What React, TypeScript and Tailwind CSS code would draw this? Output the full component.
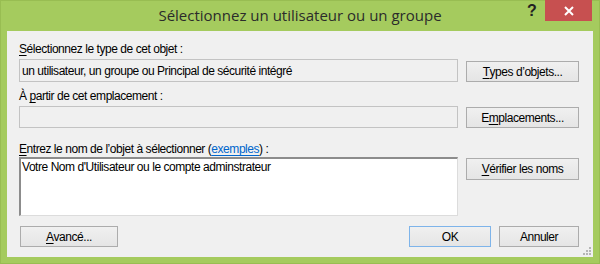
import React from 'react';

function U({ children }: { children: React.ReactNode }) {
  return <span className="underline underline-offset-2">{children}</span>;
}

function Button({
  children,
  className = '',
  primary = false,
}: {
  children: React.ReactNode;
  className?: string;
  primary?: boolean;
}) {
  return (
    <button
      type="button"
      className={`h-[21px] border bg-gradient-to-b from-[#f0f0f0] to-[#e5e5e5] text-[12px] tracking-[-0.45px] text-black leading-none flex items-center justify-center ${
        primary ? 'border-[#7eb4ea]' : 'border-[#acacac]'
      } ${className}`}
    >
      {children}
    </button>
  );
}

export default function App() {
  return (
    <div
      className="w-[600px] h-[264px] bg-[#a5cb5e] flex flex-col border border-[#98bd52]"
      style={{ fontFamily: '"Liberation Sans", Arial, sans-serif' }}
    >
      <div className="relative h-[30px] shrink-0">
        <div
          className="absolute inset-0 flex items-center justify-center pb-[1px] text-[15px] text-[#2b2b2b]"
          style={{ fontFamily: '"Open Sans", "Noto Sans", sans-serif' }}
        >
          Sélectionnez un utilisateur ou un groupe
        </div>
        <div className="absolute right-[7px] top-[-1px] flex items-start">
          <div className="w-[22px] h-[22px] flex items-center justify-center text-[16px] font-bold text-[#222] mr-[2px]">
            ?
          </div>
          <div className="w-[47px] h-[21px] bg-[#c75050] flex items-center justify-center">
            <svg width="10" height="10" viewBox="0 0 10 10">
              <path d="M1 1 L9 9 M9 1 L1 9" stroke="#fff" strokeWidth="2" />
            </svg>
          </div>
        </div>
      </div>

      <div className="relative mx-[6px] h-[226px] bg-[#f0f0f0] pl-[12px] pr-[14px] pt-[11px] text-[12px] tracking-[-0.45px] text-black">
        <div className="leading-[14px]">
          <U>S</U>électionnez le type de cet objet :
        </div>
        <div className="flex items-start gap-[8px] mt-[3px]">
          <div className="flex-1 h-[23px] border border-[#c3c3c3] bg-[#f0f0f0] flex items-center px-[2px]">
            un utilisateur, un groupe ou Principal de sécurité intégré
          </div>
          <Button className="w-[113px] mt-[2px]">
            <U>T</U>ypes d’objets...
          </Button>
        </div>

        <div className="leading-[14px] mt-[7px]">
          À <U>p</U>artir de cet emplacement :
        </div>
        <div className="flex items-start gap-[8px] mt-[3px]">
          <div className="flex-1 h-[22px] border border-[#c3c3c3] bg-[#f0f0f0]" />
          <Button className="w-[113px] mt-[1px] h-[20px]">
            E<U>m</U>placements...
          </Button>
        </div>

        <div className="leading-[14px] mt-[14px]">
          <U>E</U>ntrez le nom de l’objet à sélectionner (
          <span className="text-[#0066cc] underline underline-offset-2">exemples</span>) :
        </div>
        <div className="flex items-start gap-[8px] mt-[1px]">
          <div className="flex-1 h-[59px] border border-[#dcdcdc] border-t-[#8c8c8c] border-l-[#8c8c8c] border-t-2 border-l-2 bg-white px-[1px] pt-[1px] leading-[14px]">
            Votre Nom d'Utilisateur ou le compte adminstrateur
          </div>
          <Button className="w-[113px] h-[22px] mt-[1px]">
            <U>V</U>érifier les noms
          </Button>
        </div>

        <div className="flex items-start mt-[10px]">
          <Button className="w-[98px] ml-[1px]">
            <U>A</U>vancé...
          </Button>
          <div className="flex-1" />
          <Button primary className="w-[82px]">
            OK
          </Button>
          <Button className="w-[80px] ml-[8px]">Annuler</Button>
        </div>

        <svg className="absolute right-[2px] bottom-[2px]" width="8" height="8" viewBox="0 0 8 8">
          <rect x="6" y="0" width="2" height="2" fill="#b5b5b5" />
          <rect x="3" y="3" width="2" height="2" fill="#b5b5b5" />
          <rect x="6" y="3" width="2" height="2" fill="#b5b5b5" />
          <rect x="0" y="6" width="2" height="2" fill="#b5b5b5" />
          <rect x="3" y="6" width="2" height="2" fill="#b5b5b5" />
          <rect x="6" y="6" width="2" height="2" fill="#b5b5b5" />
        </svg>
      </div>
    </div>
  );
}
